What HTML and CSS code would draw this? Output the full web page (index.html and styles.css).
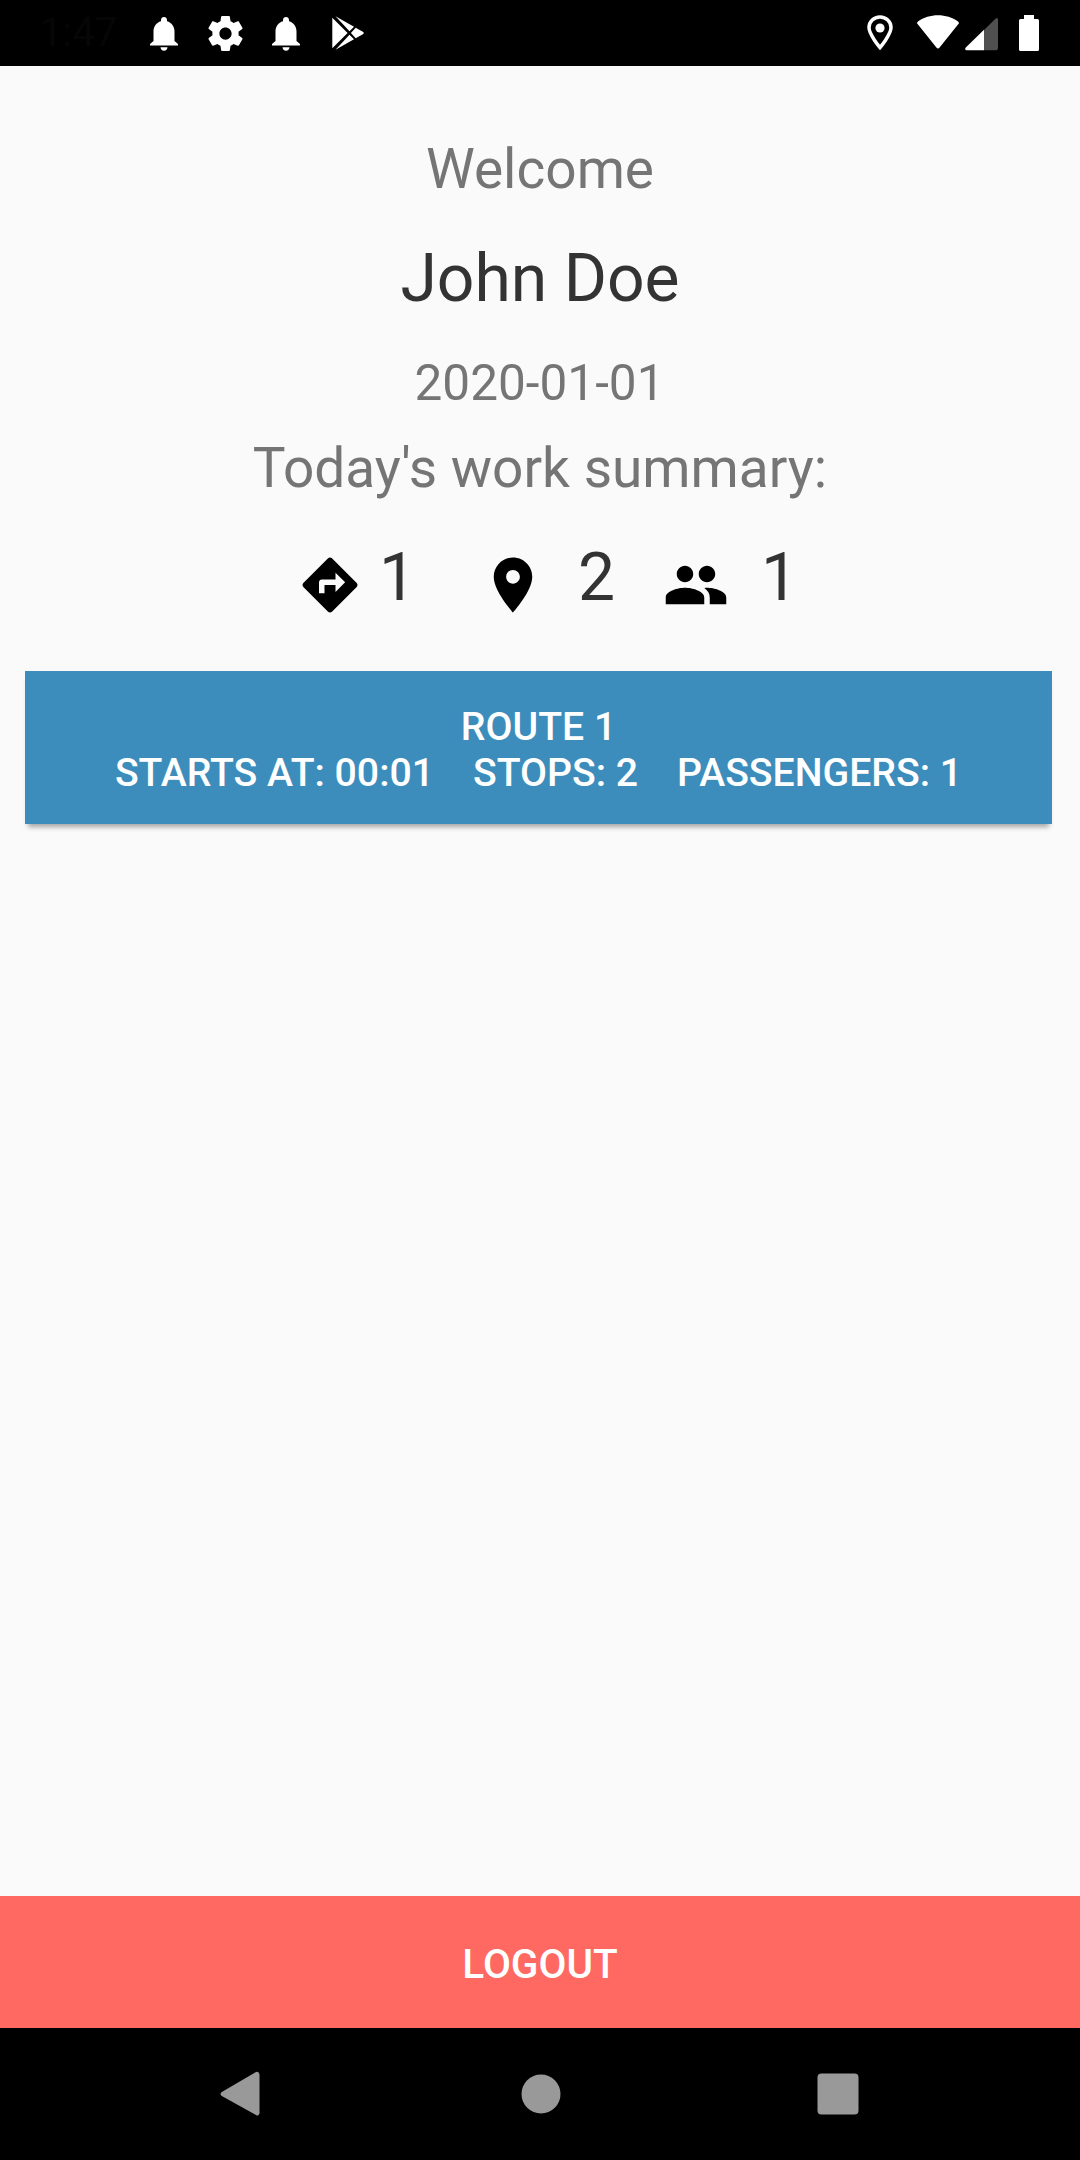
FILE: index.html
```html
<!DOCTYPE html>
<html lang="en">
<head>
<meta charset="utf-8">
<title>Work summary</title>
<link rel="stylesheet" href="styles.css">
</head>
<body>
<div class="screen">
  <header class="status">
    <span class="clock">1:47</span>
    <svg class="bell" viewBox="0 0 28 34"><path d="M14 0c1.700 0 3 1.300 3 3v1.200c4.600 1.300 7.500 5.400 7.500 10.300V24l3.500 3v1.500H0V27l3.500-3v-9.500C3.500 9.600 6.400 5.500 11 4.200V3c0-1.700 1.300-3 3-3zM10.500 30.300h7c0 1.900-1.500 3.400-3.500 3.400s-3.500-1.500-3.500-3.400z"/></svg>
    <svg class="gear" viewBox="2 2 20 20"><path d="M19.430 12.980c.040-.320.070-.640.070-.980s-.030-.660-.070-.980l2.110-1.650c.190-.150.240-.420.120-.640l-2-3.460c-.120-.220-.390-.300-.610-.220l-2.490 1c-.520-.400-1.080-.730-1.690-.980l-.380-2.650C14.460 2.180 14.250 2 14 2h-4c-.250 0-.460.180-.490.420l-.380 2.650c-.610.250-1.170.590-1.690.980l-2.490-1c-.230-.090-.490 0-.610.220l-2 3.460c-.130.220-.070.490.120.640l2.110 1.650c-.040.320-.070.650-.070.980s.030.660.070.980l-2.110 1.650c-.190.150-.240.420-.120.640l2 3.460c.120.220.390.300.610.220l2.490-1c.520.400 1.080.730 1.690.980l.380 2.650c.030.240.240.420.490.420h4c.250 0 .460-.180.490-.420l.380-2.650c.610-.250 1.170-.590 1.690-.980l2.490 1c.230.090.490 0 .610-.220l2-3.460c.120-.220.070-.490-.120-.640l-2.110-1.650zM12 15.500c-1.930 0-3.500-1.570-3.500-3.500s1.570-3.500 3.500-3.500 3.500 1.570 3.500 3.500-1.570 3.500-3.500 3.500z"/></svg>
    <svg class="bell" viewBox="0 0 28 34"><path d="M14 0c1.700 0 3 1.300 3 3v1.200c4.600 1.300 7.500 5.400 7.500 10.300V24l3.500 3v1.500H0V27l3.500-3v-9.500C3.500 9.600 6.400 5.500 11 4.200V3c0-1.700 1.300-3 3-3zM10.500 30.300h7c0 1.900-1.500 3.400-3.500 3.400s-3.500-1.500-3.500-3.400z"/></svg>
    <svg class="play" viewBox="0 0 32 34"><path d="M.3 1.800 15.600 17 .3 32.200zM3.500.2l18.500 10.600-4.500 4.500zM23.700 11.800l7.600 4.300q.8.900 0 1.800l-7.600 4.300L18.900 17zM17.500 18.700l4.500 4.500L3.500 33.800z"/></svg>
    <span class="spacer"></span>
    <svg class="place" viewBox="0 0 26 36"><path class="place-ring" d="M13 2C6.900 2 2 6.700 2 12.600 2 19.600 13 32.500 13 32.500s11-12.900 11-19.900C24 6.700 19.100 2 13 2z"/><circle cx="13" cy="13" r="4.600"/></svg>
    <svg class="wifi" viewBox="0 0 42 34"><path d="M.8 9.200Q-.7 7.800 1 6.500C12-1.800 30-1.800 41 6.500q1.700 1.300.2 2.700L22.600 32.600q-1.600 1.700-3.200 0z"/></svg>
    <svg class="signal" viewBox="0 0 33 34"><path class="dim" d="M19 13 31 1.200q2-1 2 1.300V31q0 2.300-2 2.300H19z"/><path d="M19 12.800v20.500H1.500Q-.8 32.500.8 30.600z"/></svg>
    <svg class="battery" viewBox="0 0 20 36"><path d="M5 0h10v4h3.500Q20 4 20 5.500v29q0 1.500-1.500 1.500h-17Q0 36 0 34.500v-29Q0 4 1.500 4H5z"/></svg>
  </header>
  <main class="content">
    <p class="welcome">Welcome</p>
    <h1 class="name">John Doe</h1>
    <p class="date">2020-01-01</p>
    <p class="caption">Today's work summary:</p>
    <div class="summary">
      <svg class="icon" viewBox="0 0 24 24"><path d="M21.710 11.290l-9-9c-.390-.390-1.020-.390-1.410 0l-9 9c-.390.390-.390 1.020 0 1.410l9 9c.390.390 1.020.390 1.410 0l9-9c.390-.380.390-1.010 0-1.410zM14 14.500V12h-4v3H8v-4c0-.550.450-1 1-1h5V7.500l3.500 3.500-3.500 3.500z"/></svg>
      <span class="count routes">1</span>
      <svg class="icon" viewBox="0 0 24 24"><path d="M12 2C8.130 2 5 5.130 5 9c0 5.250 7 13 7 13s7-7.750 7-13c0-3.870-3.130-7-7-7zm0 9.500c-1.380 0-2.500-1.120-2.500-2.500s1.120-2.500 2.500-2.500 2.500 1.120 2.500 2.500-1.120 2.500-2.500 2.500z"/></svg>
      <span class="count stops">2</span>
      <svg class="icon" viewBox="0 0 24 24"><path d="M16 11c1.660 0 2.990-1.340 2.990-3S17.660 5 16 5s-3 1.340-3 3 1.340 3 3 3zm-8 0c1.660 0 2.990-1.340 2.990-3S9.660 5 8 5 5 6.340 5 8s1.340 3 3 3zm0 2c-2.330 0-7 1.170-7 3.500V19h14v-2.500c0-2.330-4.670-3.500-7-3.500zm8 0c-.290 0-.620.020-.970.050 1.160.840 1.970 1.970 1.970 3.450V19h6v-2.500c0-2.330-4.670-3.500-7-3.500z"/></svg>
      <span class="count people">1</span>
    </div>
    <button class="route"><span>ROUTE 1</span><span class="details">STARTS AT: 00:01    STOPS: 2    PASSENGERS: 1</span></button>
  </main>
  <button class="logout">LOGOUT</button>
  <nav class="navbar">
    <svg class="nav-icon" viewBox="0 0 46 46"><path d="M39.500 3.500v39q-1 3-3.500 1.500L1.800 25q-2.600-2 0-4L36 1q2.800-1.200 3.500 2.500z"/></svg>
    <svg class="nav-icon" viewBox="0 0 46 46"><circle cx="23" cy="23" r="19.500"/></svg>
    <svg class="nav-icon" viewBox="0 0 46 46"><rect x="2.500" y="2.500" width="41" height="41" rx="4"/></svg>
  </nav>
</div>
</body>
</html>
```
FILE: styles.css
```css
* { box-sizing: border-box; }
body { margin: 0; background: #fafafa; font-family: Roboto, sans-serif; }
p, h1 { margin: 0; font-weight: 400; }
button { border: 0; padding: 0; font-family: inherit; font-weight: 500; color: #fff; }
svg { display: block; flex: none; }

.screen { width: 1080px; height: 2160px; display: flex; flex-direction: column; }

.status { height: 66px; flex: none; background: #000; display: flex; align-items: flex-start; padding: 0 41px 0 40px; }
.status svg { fill: #fff; }
.clock { width: 110px; color: #060606; font-size: 40px; line-height: 66px; }
.bell { width: 28px; height: 34px; margin-top: 17px; }
.gear { width: 35px; height: 35px; margin: 16px 29px 0 30px; }
.play { width: 32px; height: 34px; margin: 16px 0 0 32px; }
.spacer { flex: 1; }
.place { width: 26px; height: 36px; margin: 14.500px 24px 0 0; }
.place .place-ring { fill: none; stroke: #fff; stroke-width: 3.500; }
.wifi { width: 42px; height: 34px; margin: 15px 6px 0 0; }
.signal { width: 33px; height: 34px; margin: 17px 21px 0 0; }
.signal .dim { fill: #505050; }
.battery { width: 20px; height: 36px; margin-top: 15px; }

.content { flex: 1; padding: 71px 28px 0 25px; text-align: center; }
.welcome, .name, .date, .caption { width: 1030px; color: #757575; }
.welcome { font-size: 55px; line-height: 64px; }
.name { margin-top: 39px; font-size: 66px; line-height: 78px; color: #333; }
.date { width: 1029px; margin-top: 36px; font-size: 49.500px; line-height: 58px; }
.caption { margin-top: 24px; font-size: 55px; line-height: 64px; }
.summary { margin-top: 39px; padding-left: 272px; height: 84px; display: flex; align-items: flex-start; }
.icon { width: 66px; height: 66px; margin-top: 13px; }
.count { color: #333; font-size: 66px; line-height: 78px; text-align: left; }
.routes { width: 117px; padding-left: 16px; }
.stops { width: 117px; padding-left: 32px; }
.people { padding-left: 32px; }
.route { width: 1027px; height: 153px; margin-top: 48px; padding-top: 4px; display: flex; flex-direction: column; align-items: center; justify-content: center; background: #3c8dbc; font-size: 39.200px; line-height: 46px; box-shadow: 0 6px 5px -3px rgba(0, 0, 0, .34); }
.details { white-space: pre; }

.logout { height: 132px; flex: none; background: #ff6961; font-size: 40.600px; padding-top: 3px; }
.navbar { height: 132px; flex: none; background: #000; display: flex; justify-content: space-between; align-items: center; padding: 0 219px 0 220px; }
.nav-icon { width: 46px; height: 46px; fill: #999; }
```
